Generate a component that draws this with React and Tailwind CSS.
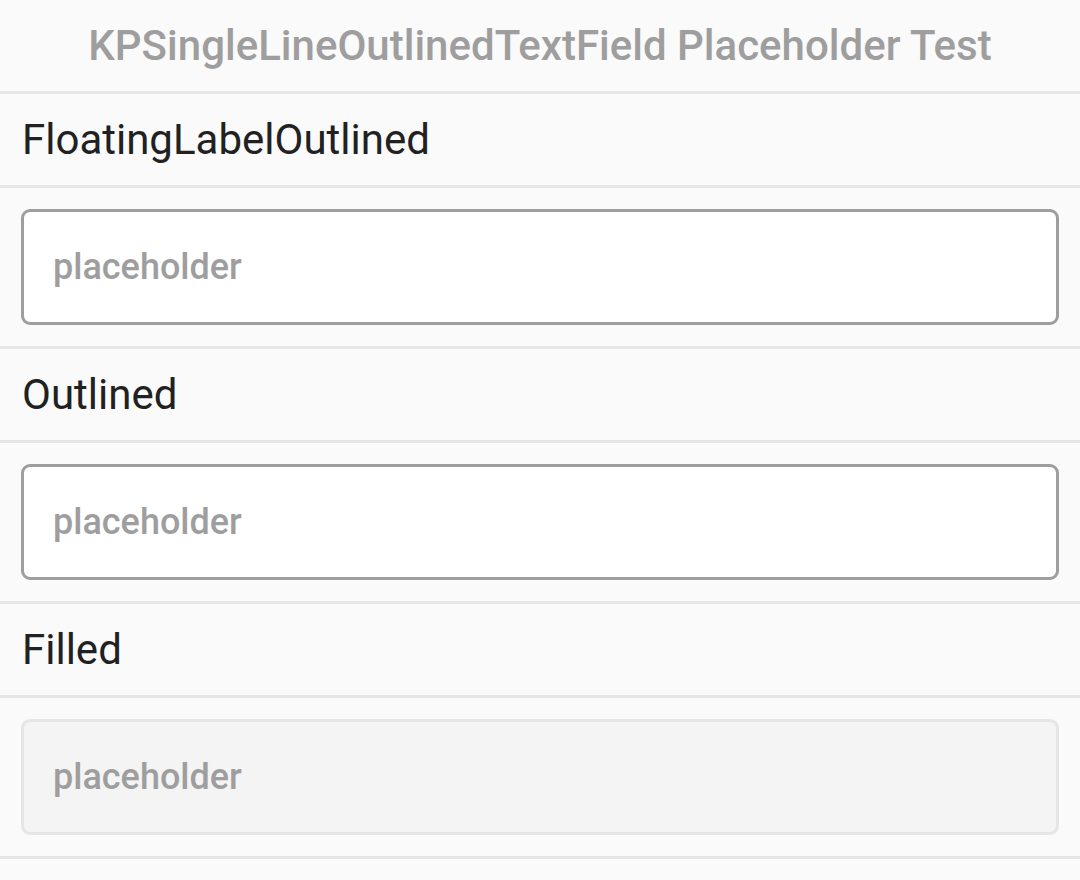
export default function App() {
  const Divider = () => <div className="h-[3px] bg-[#e6e6e6]" />;
  const Label = ({ children }) => (
    <div className="h-[91px] flex items-center px-[22px] text-[42px] text-[#212121]">{children}</div>
  );
  const Box = ({ filled }) => (
    <div className="h-[158px] px-[21px] pt-[21px]">
      <div
        className={
          filled
            ? "h-[116px] rounded-[9px] border-[3px] border-[#e6e6e6] bg-[#f4f4f4] flex items-center pl-[29px] text-[36px] font-medium text-[#9e9e9e]"
            : "h-[116px] rounded-[9px] border-[3px] border-[#9e9e9e] bg-white flex items-center pl-[29px] text-[36px] font-medium text-[#9e9e9e]"
        }
      >
        placeholder
      </div>
    </div>
  );
  return (
    <div className="w-[1080px] h-[880px] bg-[#fafafa] overflow-hidden" style={{ fontFamily: "Roboto, sans-serif" }}>
      <div className="h-[91px] flex items-center justify-center text-[42px] font-medium text-[#9e9e9e]">
        KPSingleLineOutlinedTextField Placeholder Test
      </div>
      <Divider />
      <Label>FloatingLabelOutlined</Label>
      <Divider />
      <Box />
      <Divider />
      <Label>Outlined</Label>
      <Divider />
      <Box />
      <Divider />
      <Label>Filled</Label>
      <Divider />
      <Box filled />
      <Divider />
    </div>
  );
}
